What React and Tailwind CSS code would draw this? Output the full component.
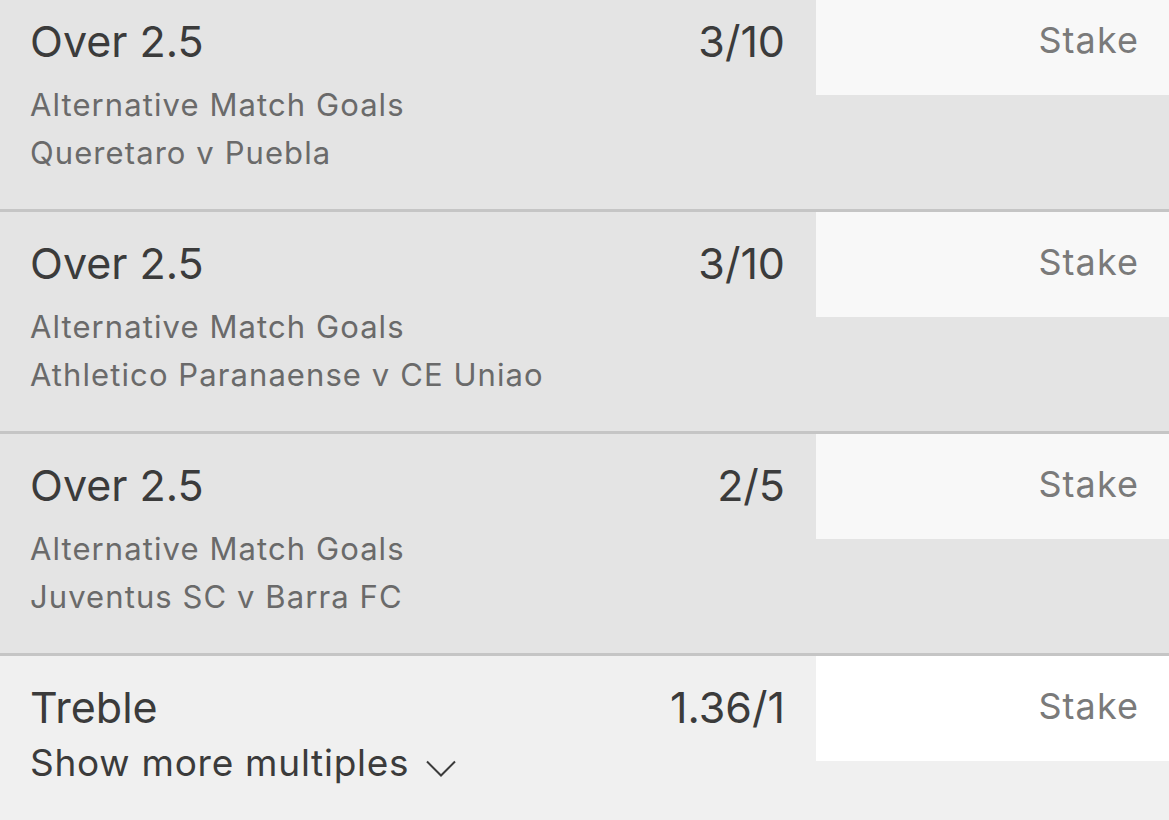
import React from "react";

const bets = [
  { odds: "3/10", match: "Queretaro v Puebla" },
  { odds: "3/10", match: "Athletico Paranaense v CE Uniao" },
  { odds: "2/5", match: "Juventus SC v Barra FC" },
];

function BetRow({ odds, match }) {
  return (
    <div className="flex h-[222px] bg-[#e4e4e4] border-b-[3px] border-[#c5c5c5]">
      <div className="flex-1 pl-[30px] pr-[31px] pt-[25px]">
        <div className="flex items-center justify-between h-[52px] text-[43px] text-[#3b3b3b]">
          <span>Over 2.5</span>
          <span>{odds}</span>
        </div>
        <div className="mt-[14px] text-[31px] tracking-[0.035em] leading-[48px] text-[#6a6a6a]">
          <div>Alternative Match Goals</div>
          <div>{match}</div>
        </div>
      </div>
      <div className="w-[353px]">
        <div className="h-[105px] bg-[#f8f8f8] flex items-center justify-end pr-[30px] pb-[6px] text-[36px] tracking-[0.03em] text-[#7a7a7a]">
          Stake
        </div>
      </div>
    </div>
  );
}

export default function App() {
  return (
    <div
      className="w-[1169px] h-[820px] overflow-hidden bg-[#f0f0f0]"
      style={{ fontFamily: "Inter, 'Noto Sans', sans-serif" }}
    >
      <div className="-mt-[10px]">
        {bets.map((b, i) => (
          <BetRow key={i} {...b} />
        ))}
        <div className="flex h-[180px] bg-[#f0f0f0]">
          <div className="flex-1 pl-[30px] pr-[31px] pt-[25px]">
            <div className="flex items-center justify-between h-[52px] text-[43px] text-[#3b3b3b]">
              <span>Treble</span>
              <span>1.36/1</span>
            </div>
            <div className="mt-[4px] flex items-center gap-[17px] text-[37px] tracking-[0.02em] leading-[52px] text-[#3b3b3b]">
              <span>Show more multiples</span>
              <svg width="30" height="17" viewBox="0 0 30 17" fill="none" className="mt-[10px]">
                <path d="M1 1.5 L15 15.5 L29 1.5" stroke="#3b3b3b" strokeWidth="2" />
              </svg>
            </div>
          </div>
          <div className="w-[353px]">
            <div className="h-[105px] bg-white flex items-center justify-end pr-[30px] pb-[6px] text-[36px] tracking-[0.03em] text-[#7a7a7a]">
              Stake
            </div>
          </div>
        </div>
      </div>
    </div>
  );
}
